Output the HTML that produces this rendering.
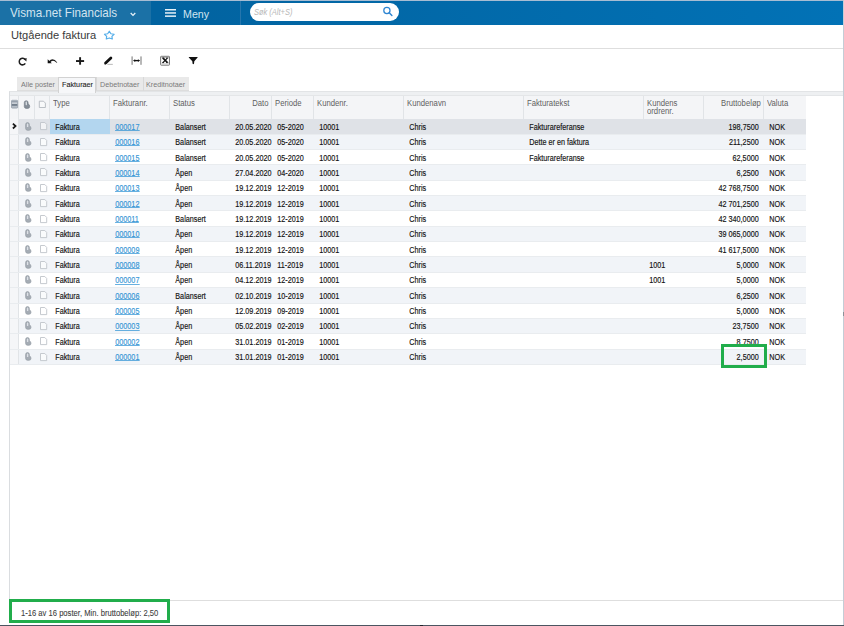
<!DOCTYPE html>
<html><head><meta charset="utf-8">
<style>
*{box-sizing:border-box;margin:0;padding:0}
html,body{width:844px;height:626px;overflow:hidden;background:#fff;font-family:"Liberation Sans",sans-serif;position:relative}
.abs{position:absolute}
#topline{left:0;top:0;width:844px;height:1px;background:#a8bdd3}
#bar{left:0;top:1px;width:844px;height:24.3px;background:linear-gradient(90deg,#0263a0 0px,#0263a0 160px,#0272b6 844px)}
#brand{left:0;top:1px;width:151px;height:24.3px;background:#1b71a6}
#brand .t{position:absolute;left:10.4px;top:5.4px;font-size:12.2px;color:#d3e4f0;white-space:nowrap;transform:scaleX(0.955);transform-origin:0 50%}
#chev{left:130px;top:12px}
#menu{left:151px;top:1px;width:90px;height:24px;border-right:1px solid #2676ad}
#ham{left:165px;top:9px;width:11px;height:8px}
#meny{left:183px;top:6.5px;font-size:11.6px;color:#d3e4f0;transform:scaleX(0.92);transform-origin:0 50%}
#search{left:250px;top:3.3px;width:149px;height:17.6px;border-radius:9px;background:#fff}
#search .ph{position:absolute;left:4px;top:3.5px;font-size:8.7px;font-style:italic;color:#b8b8b8;transform:scaleX(0.86);transform-origin:0 50%;white-space:nowrap}
#sicon{left:383px;top:8px}
#title{left:11px;top:28.7px;font-size:11.12px;color:#3a3a3a;white-space:nowrap}
#star{left:104px;top:30px}
#hr1{left:0;top:48px;width:843px;height:1px;background:#dedede}
#rborder{left:843px;top:0;width:1px;height:626px;background:#c4cdd6}
.ti{position:absolute}
#tabs{left:17px;top:76.7px;height:15.5px}
.tab{position:absolute;top:0;height:14.8px;background:#e9e9e9;font-size:7.2px;color:#7a7a7a;line-height:15.9px;padding-left:3.9px;white-space:nowrap;border-bottom:1px solid #dddddd}
.tt{display:inline-block;transform:scaleX(0.92);transform-origin:0 50%;font-size:7.8px}
.tab.act{background:#f6f7f9;border:1px solid #d2d2d2;border-bottom:none;color:#1e1e1e;height:16.5px;line-height:14.4px;padding-left:3.2px;font-size:7.8px;-webkit-text-stroke-width:0.1px;z-index:5}
#grid{left:9px;top:91px;width:834px;height:509px;border-left:1px solid #dadde0;border-top:1px solid #e2e4e6}
#gband{left:10px;top:92px;width:833px;height:3.5px;background:#eef0f2;border-bottom:1px solid #e4e6e8}
#hdr{left:10px;top:95.5px;height:23.5px;width:795.5px;background:#f4f5f7}
.hc{position:absolute;top:0;height:23.5px;border-right:1px solid #e1e4e7;font-size:8.3px;color:#5f5f5f;padding:3.4px 2.5px 0 3.3px;line-height:8.1px}
.ht{display:inline-block;transform:scaleX(0.93);transform-origin:0 0}
.ht.r{transform-origin:100% 0}
.row{position:absolute;left:10px;width:795.5px;height:15.36px;border-bottom:1px solid #e9ecef}
.row.alt{background:#f1f4f8}
.row.sel{background:#dfe2e7}
.c{position:absolute;top:0.6px;height:15.3px;font-size:8.5px;color:#111;line-height:15.6px;white-space:nowrap;padding:0 5.3px;overflow:visible;transform:scaleX(0.85);transform-origin:5.3px 50%;-webkit-text-stroke-width:0.15px}
.c.r{text-align:right;transform-origin:calc(100% - 5.3px) 50%}
.c a{color:#3596d6;text-decoration:none;background:linear-gradient(#3596d6,#3596d6) no-repeat 0 calc(100% - 1.1px)/100% 0.75px}
#footline{left:10px;top:599.7px;width:833px;height:1px;background:#dedede}
#foot{left:21px;top:607.6px;font-size:8.4px;color:#3c3c3c;white-space:nowrap;-webkit-text-stroke-width:0.08px;transform:scaleX(0.91);transform-origin:0 50%}
#gbox1{left:8.5px;top:599px;width:161.5px;height:23.7px;border:3.4px solid #21ad4b}
#gbox2{left:721.2px;top:344.1px;width:45.8px;height:23.7px;border:3.4px solid #21ad4b}
#bottom{left:0;top:624.6px;width:844px;height:1.4px;background:#4c5561}
.ic{position:absolute}
.arr{left:2.3px;top:4.1px}
.clip{left:14.9px;top:2.6px}
.doc{left:29.6px;top:3.2px}
.rs{position:absolute;left:0;top:0;width:8.5px;height:100%;background:#f5f6f8;border-right:1px solid #e1e4e7}
.selcell{position:absolute;left:39.5px;top:0;width:60px;height:100%;background:#b3d6ef}
</style></head><body>
<div class="abs" id="topline"></div>
<div class="abs" id="bar"></div>
<div class="abs" id="brand"><span class="t">Visma.net Financials</span></div>
<svg class="abs" id="chev" width="6" height="5" viewBox="0 0 6 5"><path d="M0.7 1 L3 3.4 L5.3 1" stroke="#e6f1f8" stroke-width="1.3" fill="none"/></svg>
<div class="abs" id="menu"></div>
<svg class="abs" id="ham" viewBox="0 0 11 8"><rect x="0" y="0" width="11" height="1.5" fill="#e6f1f8"/><rect x="0" y="3.2" width="11" height="1.5" fill="#e6f1f8"/><rect x="0" y="6.4" width="11" height="1.5" fill="#e6f1f8"/></svg>
<div class="abs" id="meny">Meny</div>
<div class="abs" id="search"><span class="ph">Søk (Alt+S)</span></div>
<svg class="abs" style="left:376px;top:2px" width="20" height="20" viewBox="376 2 20 20"><circle cx="386.9" cy="10.4" r="3.1" stroke="#2f86d2" stroke-width="1.25" fill="none"/><path d="M389.2 12.8 L391.9 15.6" stroke="#2f86d2" stroke-width="1.4" stroke-linecap="round"/></svg>

<div class="abs" id="title">Utgående faktura</div>
<svg class="abs" style="left:0;top:25px" width="130" height="20" viewBox="0 25 130 20"><path d="M109.30 31.2 L110.92 33.73 L114.1 34.28 L111.92 36.39 L112.3 39.0 L109.30 37.96 L106.3 39.0 L106.68 36.39 L104.5 34.28 L107.68 33.73 Z" stroke="#56aee9" stroke-width="1.2" fill="none" stroke-linejoin="round"/></svg>
<div class="abs" id="hr1"></div>

<!-- toolbar -->
<svg class="abs" style="left:0;top:50px" width="210" height="22" viewBox="0 50 210 22">
<path d="M25.2 59.6 A3.3 3.3 0 1 0 25.3 63.4" stroke="#1e1e1e" stroke-width="1.5" fill="none"/>
<path d="M23.6 58.9 L26.6 58.1 L26.4 61.4 Z" fill="#1e1e1e"/>
<path d="M48.8 61.4 Q52.8 56.6 57.3 62.4 L56.6 62.8 Q52.8 58.6 50 62.6 Z" fill="#1e1e1e"/>
<path d="M47.7 59.2 L47.7 63.3 L51.8 63.3 Z" fill="#111"/>
<rect x="76" y="60.1" width="8.1" height="1.9" fill="#1a1a1a"/>
<rect x="79.15" y="57.2" width="1.9" height="7.5" fill="#1a1a1a"/>
<path d="M105.6 63.0 L110.9 58.0" stroke="#111" stroke-width="2.8" stroke-linecap="round"/>
<path d="M104.6 64.4 L105 62.2 L106.6 63.8 Z" fill="#111"/>
<rect x="107.4" y="63.9" width="5.4" height="0.7" fill="#9a9a9a"/>
<rect x="131.5" y="56.4" width="1.2" height="8.4" fill="#8a8a8a"/>
<rect x="140.4" y="56.4" width="1.2" height="8.4" fill="#8a8a8a"/>
<path d="M134.5 60.6 L138.6 60.6" stroke="#111" stroke-width="1.3"/>
<path d="M133 60.6 L135.2 59.2 L135.2 62 Z M140.1 60.6 L137.9 59.2 L137.9 62 Z" fill="#111"/>
<rect x="160.6" y="56.3" width="8.9" height="8.9" rx="0.6" stroke="#7a7a7a" stroke-width="1" fill="#fdfdfd"/>
<rect x="161.3" y="57" width="7.5" height="0.6" fill="#909090"/>
<rect x="161.3" y="63.4" width="7.5" height="1.2" fill="#c8c8c8"/>
<path d="M163 58.2 L167.4 62.5" stroke="#111" stroke-width="1.7"/><path d="M167.3 58.2 L163.1 62.5" stroke="#111" stroke-width="1.1"/><path d="M162 58.1 L164.3 58.1 M166.2 58.1 L168.2 58.1 M162 62.6 L164 62.6 M166 62.6 L168.3 62.6" stroke="#111" stroke-width="0.8"/>
<path d="M188.8 56.9 L197.6 56.9 L197.6 57.6 L194.3 61.3 L194.0 63.8 Q193.3 64.7 192.6 63.8 L192.3 61.3 L188.8 57.6 Z" fill="#111"/>
</svg>
<!-- tabs -->
<div class="abs" id="tabs" style="z-index:5">
  <div class="tab" style="left:0;width:41px"><span class="tt">Alle poster</span></div>
  <div class="tab act" style="left:41px;width:37.5px"><span class="tt" style="transform:scaleX(0.93)">Fakturaer</span></div>
  <div class="tab" style="left:78.5px;width:47.5px;border-left:1px solid #d8d8d8"><span class="tt">Debetnotaer</span></div>
  <div class="tab" style="left:125.5px;width:46.5px;border-left:1px solid #d8d8d8;padding-left:2.8px"><span class="tt">Kreditnotaer</span></div>
</div>

<div class="abs" id="grid"></div>
<div class="abs" id="gband"></div>
<div class="abs" id="hdr">
  <div class="hc" style="left:0;width:8.5px"></div>
  <div class="hc" style="left:8.5px;width:16px"></div>
  <div class="hc" style="left:24.5px;width:15px"></div>
  <div class="hc" style="left:39.5px;width:60px"><span class="ht">Type</span></div>
  <div class="hc" style="left:99.5px;width:60px"><span class="ht">Fakturanr.</span></div>
  <div class="hc" style="left:159.5px;width:60px"><span class="ht">Status</span></div>
  <div class="hc" style="left:219.5px;width:42px;text-align:right;padding-right:1.6px"><span class="ht r">Dato</span></div>
  <div class="hc" style="left:261.5px;width:42px"><span class="ht">Periode</span></div>
  <div class="hc" style="left:303.5px;width:90px"><span class="ht">Kundenr.</span></div>
  <div class="hc" style="left:393.5px;width:120px"><span class="ht">Kundenavn</span></div>
  <div class="hc" style="left:513.5px;width:120px"><span class="ht">Fakturatekst</span></div>
  <div class="hc" style="left:633.5px;width:60px"><span class="ht">Kundens<br>ordrenr.</span></div>
  <div class="hc" style="left:693.5px;width:60px;text-align:right;padding-right:1.5px"><span class="ht r">Bruttobeløp</span></div>
  <div class="hc" style="left:753.5px;width:42px;border-right:none"><span class="ht">Valuta</span></div>
</div>

<svg class="abs" style="left:0;top:95px" width="50" height="20" viewBox="0 95 50 20">
<rect x="11.5" y="100.3" width="6.1" height="7.8" rx="0.7" fill="#c9cfd6" stroke="#8893a0" stroke-width="0.7"/>
<rect x="11.8" y="101.2" width="5.5" height="1.1" fill="#8a95a2"/>
<rect x="11.8" y="104.2" width="5.5" height="1.5" fill="#5f6c7b"/>
<rect x="11.8" y="106.6" width="5.5" height="0.9" fill="#9aa4ae"/>
<g transform="translate(23.7 100.1)"><path d="M0.6 6.6 L0.6 2.5 A1.9 1.9 0 0 1 4.4 2.5 L4.4 3.7 Q6.0 4.5 6.0 6.3 A2 2 0 0 1 4 8.3 L2.5 8.3 A1.9 1.9 0 0 1 0.6 6.6 Z" fill="#858d97" stroke="#6f7781" stroke-width="0.6"/><rect x="1.9" y="1.5" width="1.4" height="3.6" rx="0.6" fill="#d5dae0"/></g>
<path d="M39.3 101.2 L43.5 101.2 L45.4 103.1 L45.4 107.5 L39.3 107.5 Z" stroke="#b3b8be" stroke-width="0.9" fill="#f8f9fa" stroke-linejoin="round"/>
</svg>
<div id="rows">
<div class="row sel" style="top:119.20px"><div class="rs"></div><svg class="ic arr" width="5" height="7" viewBox="0 0 5 7"><path d="M0.9 0.7 L3.5 3.1 L0.9 5.5" stroke="#1a1a1a" stroke-width="1.8" fill="none"/></svg><div class="selcell"></div><svg class="ic clip" width="7" height="9" viewBox="0 0 7 9"><path d="M0.6 6.6 L0.6 2.5 A1.9 1.9 0 0 1 4.4 2.5 L4.4 3.7 Q6.0 4.5 6.0 6.3 A2 2 0 0 1 4 8.3 L2.5 8.3 A1.9 1.9 0 0 1 0.6 6.6 Z" fill="#a5acb4" stroke="#8d959e" stroke-width="0.6"/><rect x="1.9" y="1.5" width="1.4" height="3.6" rx="0.6" fill="#dde1e6"/></svg><svg class="ic doc" width="8" height="9" viewBox="0 0 8 9"><path d="M0.5 0.5 L4.8 0.5 L6.7 2.4 L6.7 7.6 L0.5 7.6 Z" stroke="#bfc4c9" stroke-width="0.9" fill="rgba(255,255,255,0.6)" stroke-linejoin="round"/></svg><div class="c" style="left:39.5px;width:60px">Faktura</div><div class="c" style="left:99.5px;width:60px"><a>000017</a></div><div class="c" style="left:159.5px;width:60px">Balansert</div><div class="c" style="left:219.5px;width:42px">20.05.2020</div><div class="c" style="left:261.5px;width:42px">05-2020</div><div class="c" style="left:303.5px;width:90px">10001</div><div class="c" style="left:393.5px;width:120px">Chris</div><div class="c" style="left:513.5px;width:120px">Fakturareferanse</div><div class="c r" style="left:693.5px;width:60px">198,7500</div><div class="c" style="left:753.5px;width:42px">NOK</div></div>
<div class="row alt" style="top:134.56px"><div class="rs"></div><svg class="ic clip" width="7" height="9" viewBox="0 0 7 9"><path d="M0.6 6.6 L0.6 2.5 A1.9 1.9 0 0 1 4.4 2.5 L4.4 3.7 Q6.0 4.5 6.0 6.3 A2 2 0 0 1 4 8.3 L2.5 8.3 A1.9 1.9 0 0 1 0.6 6.6 Z" fill="#a5acb4" stroke="#8d959e" stroke-width="0.6"/><rect x="1.9" y="1.5" width="1.4" height="3.6" rx="0.6" fill="#dde1e6"/></svg><svg class="ic doc" width="8" height="9" viewBox="0 0 8 9"><path d="M0.5 0.5 L4.8 0.5 L6.7 2.4 L6.7 7.6 L0.5 7.6 Z" stroke="#bfc4c9" stroke-width="0.9" fill="rgba(255,255,255,0.6)" stroke-linejoin="round"/></svg><div class="c" style="left:39.5px;width:60px">Faktura</div><div class="c" style="left:99.5px;width:60px"><a>000016</a></div><div class="c" style="left:159.5px;width:60px">Balansert</div><div class="c" style="left:219.5px;width:42px">20.05.2020</div><div class="c" style="left:261.5px;width:42px">05-2020</div><div class="c" style="left:303.5px;width:90px">10001</div><div class="c" style="left:393.5px;width:120px">Chris</div><div class="c" style="left:513.5px;width:120px">Dette er en faktura</div><div class="c r" style="left:693.5px;width:60px">211,2500</div><div class="c" style="left:753.5px;width:42px">NOK</div></div>
<div class="row" style="top:149.92px"><div class="rs"></div><svg class="ic clip" width="7" height="9" viewBox="0 0 7 9"><path d="M0.6 6.6 L0.6 2.5 A1.9 1.9 0 0 1 4.4 2.5 L4.4 3.7 Q6.0 4.5 6.0 6.3 A2 2 0 0 1 4 8.3 L2.5 8.3 A1.9 1.9 0 0 1 0.6 6.6 Z" fill="#a5acb4" stroke="#8d959e" stroke-width="0.6"/><rect x="1.9" y="1.5" width="1.4" height="3.6" rx="0.6" fill="#dde1e6"/></svg><svg class="ic doc" width="8" height="9" viewBox="0 0 8 9"><path d="M0.5 0.5 L4.8 0.5 L6.7 2.4 L6.7 7.6 L0.5 7.6 Z" stroke="#bfc4c9" stroke-width="0.9" fill="rgba(255,255,255,0.6)" stroke-linejoin="round"/></svg><div class="c" style="left:39.5px;width:60px">Faktura</div><div class="c" style="left:99.5px;width:60px"><a>000015</a></div><div class="c" style="left:159.5px;width:60px">Balansert</div><div class="c" style="left:219.5px;width:42px">20.05.2020</div><div class="c" style="left:261.5px;width:42px">05-2020</div><div class="c" style="left:303.5px;width:90px">10001</div><div class="c" style="left:393.5px;width:120px">Chris</div><div class="c" style="left:513.5px;width:120px">Fakturareferanse</div><div class="c r" style="left:693.5px;width:60px">62,5000</div><div class="c" style="left:753.5px;width:42px">NOK</div></div>
<div class="row alt" style="top:165.28px"><div class="rs"></div><svg class="ic clip" width="7" height="9" viewBox="0 0 7 9"><path d="M0.6 6.6 L0.6 2.5 A1.9 1.9 0 0 1 4.4 2.5 L4.4 3.7 Q6.0 4.5 6.0 6.3 A2 2 0 0 1 4 8.3 L2.5 8.3 A1.9 1.9 0 0 1 0.6 6.6 Z" fill="#a5acb4" stroke="#8d959e" stroke-width="0.6"/><rect x="1.9" y="1.5" width="1.4" height="3.6" rx="0.6" fill="#dde1e6"/></svg><svg class="ic doc" width="8" height="9" viewBox="0 0 8 9"><path d="M0.5 0.5 L4.8 0.5 L6.7 2.4 L6.7 7.6 L0.5 7.6 Z" stroke="#bfc4c9" stroke-width="0.9" fill="rgba(255,255,255,0.6)" stroke-linejoin="round"/></svg><div class="c" style="left:39.5px;width:60px">Faktura</div><div class="c" style="left:99.5px;width:60px"><a>000014</a></div><div class="c" style="left:159.5px;width:60px">Åpen</div><div class="c" style="left:219.5px;width:42px">27.04.2020</div><div class="c" style="left:261.5px;width:42px">04-2020</div><div class="c" style="left:303.5px;width:90px">10001</div><div class="c" style="left:393.5px;width:120px">Chris</div><div class="c r" style="left:693.5px;width:60px">6,2500</div><div class="c" style="left:753.5px;width:42px">NOK</div></div>
<div class="row" style="top:180.64px"><div class="rs"></div><svg class="ic clip" width="7" height="9" viewBox="0 0 7 9"><path d="M0.6 6.6 L0.6 2.5 A1.9 1.9 0 0 1 4.4 2.5 L4.4 3.7 Q6.0 4.5 6.0 6.3 A2 2 0 0 1 4 8.3 L2.5 8.3 A1.9 1.9 0 0 1 0.6 6.6 Z" fill="#a5acb4" stroke="#8d959e" stroke-width="0.6"/><rect x="1.9" y="1.5" width="1.4" height="3.6" rx="0.6" fill="#dde1e6"/></svg><svg class="ic doc" width="8" height="9" viewBox="0 0 8 9"><path d="M0.5 0.5 L4.8 0.5 L6.7 2.4 L6.7 7.6 L0.5 7.6 Z" stroke="#bfc4c9" stroke-width="0.9" fill="rgba(255,255,255,0.6)" stroke-linejoin="round"/></svg><div class="c" style="left:39.5px;width:60px">Faktura</div><div class="c" style="left:99.5px;width:60px"><a>000013</a></div><div class="c" style="left:159.5px;width:60px">Åpen</div><div class="c" style="left:219.5px;width:42px">19.12.2019</div><div class="c" style="left:261.5px;width:42px">12-2019</div><div class="c" style="left:303.5px;width:90px">10001</div><div class="c" style="left:393.5px;width:120px">Chris</div><div class="c r" style="left:693.5px;width:60px">42 768,7500</div><div class="c" style="left:753.5px;width:42px">NOK</div></div>
<div class="row alt" style="top:196.00px"><div class="rs"></div><svg class="ic clip" width="7" height="9" viewBox="0 0 7 9"><path d="M0.6 6.6 L0.6 2.5 A1.9 1.9 0 0 1 4.4 2.5 L4.4 3.7 Q6.0 4.5 6.0 6.3 A2 2 0 0 1 4 8.3 L2.5 8.3 A1.9 1.9 0 0 1 0.6 6.6 Z" fill="#a5acb4" stroke="#8d959e" stroke-width="0.6"/><rect x="1.9" y="1.5" width="1.4" height="3.6" rx="0.6" fill="#dde1e6"/></svg><svg class="ic doc" width="8" height="9" viewBox="0 0 8 9"><path d="M0.5 0.5 L4.8 0.5 L6.7 2.4 L6.7 7.6 L0.5 7.6 Z" stroke="#bfc4c9" stroke-width="0.9" fill="rgba(255,255,255,0.6)" stroke-linejoin="round"/></svg><div class="c" style="left:39.5px;width:60px">Faktura</div><div class="c" style="left:99.5px;width:60px"><a>000012</a></div><div class="c" style="left:159.5px;width:60px">Åpen</div><div class="c" style="left:219.5px;width:42px">19.12.2019</div><div class="c" style="left:261.5px;width:42px">12-2019</div><div class="c" style="left:303.5px;width:90px">10001</div><div class="c" style="left:393.5px;width:120px">Chris</div><div class="c r" style="left:693.5px;width:60px">42 701,2500</div><div class="c" style="left:753.5px;width:42px">NOK</div></div>
<div class="row" style="top:211.36px"><div class="rs"></div><svg class="ic clip" width="7" height="9" viewBox="0 0 7 9"><path d="M0.6 6.6 L0.6 2.5 A1.9 1.9 0 0 1 4.4 2.5 L4.4 3.7 Q6.0 4.5 6.0 6.3 A2 2 0 0 1 4 8.3 L2.5 8.3 A1.9 1.9 0 0 1 0.6 6.6 Z" fill="#a5acb4" stroke="#8d959e" stroke-width="0.6"/><rect x="1.9" y="1.5" width="1.4" height="3.6" rx="0.6" fill="#dde1e6"/></svg><svg class="ic doc" width="8" height="9" viewBox="0 0 8 9"><path d="M0.5 0.5 L4.8 0.5 L6.7 2.4 L6.7 7.6 L0.5 7.6 Z" stroke="#bfc4c9" stroke-width="0.9" fill="rgba(255,255,255,0.6)" stroke-linejoin="round"/></svg><div class="c" style="left:39.5px;width:60px">Faktura</div><div class="c" style="left:99.5px;width:60px"><a>000011</a></div><div class="c" style="left:159.5px;width:60px">Balansert</div><div class="c" style="left:219.5px;width:42px">19.12.2019</div><div class="c" style="left:261.5px;width:42px">12-2019</div><div class="c" style="left:303.5px;width:90px">10001</div><div class="c" style="left:393.5px;width:120px">Chris</div><div class="c r" style="left:693.5px;width:60px">42 340,0000</div><div class="c" style="left:753.5px;width:42px">NOK</div></div>
<div class="row alt" style="top:226.72px"><div class="rs"></div><svg class="ic clip" width="7" height="9" viewBox="0 0 7 9"><path d="M0.6 6.6 L0.6 2.5 A1.9 1.9 0 0 1 4.4 2.5 L4.4 3.7 Q6.0 4.5 6.0 6.3 A2 2 0 0 1 4 8.3 L2.5 8.3 A1.9 1.9 0 0 1 0.6 6.6 Z" fill="#a5acb4" stroke="#8d959e" stroke-width="0.6"/><rect x="1.9" y="1.5" width="1.4" height="3.6" rx="0.6" fill="#dde1e6"/></svg><svg class="ic doc" width="8" height="9" viewBox="0 0 8 9"><path d="M0.5 0.5 L4.8 0.5 L6.7 2.4 L6.7 7.6 L0.5 7.6 Z" stroke="#bfc4c9" stroke-width="0.9" fill="rgba(255,255,255,0.6)" stroke-linejoin="round"/></svg><div class="c" style="left:39.5px;width:60px">Faktura</div><div class="c" style="left:99.5px;width:60px"><a>000010</a></div><div class="c" style="left:159.5px;width:60px">Åpen</div><div class="c" style="left:219.5px;width:42px">19.12.2019</div><div class="c" style="left:261.5px;width:42px">12-2019</div><div class="c" style="left:303.5px;width:90px">10001</div><div class="c" style="left:393.5px;width:120px">Chris</div><div class="c r" style="left:693.5px;width:60px">39 065,0000</div><div class="c" style="left:753.5px;width:42px">NOK</div></div>
<div class="row" style="top:242.08px"><div class="rs"></div><svg class="ic clip" width="7" height="9" viewBox="0 0 7 9"><path d="M0.6 6.6 L0.6 2.5 A1.9 1.9 0 0 1 4.4 2.5 L4.4 3.7 Q6.0 4.5 6.0 6.3 A2 2 0 0 1 4 8.3 L2.5 8.3 A1.9 1.9 0 0 1 0.6 6.6 Z" fill="#a5acb4" stroke="#8d959e" stroke-width="0.6"/><rect x="1.9" y="1.5" width="1.4" height="3.6" rx="0.6" fill="#dde1e6"/></svg><svg class="ic doc" width="8" height="9" viewBox="0 0 8 9"><path d="M0.5 0.5 L4.8 0.5 L6.7 2.4 L6.7 7.6 L0.5 7.6 Z" stroke="#bfc4c9" stroke-width="0.9" fill="rgba(255,255,255,0.6)" stroke-linejoin="round"/></svg><div class="c" style="left:39.5px;width:60px">Faktura</div><div class="c" style="left:99.5px;width:60px"><a>000009</a></div><div class="c" style="left:159.5px;width:60px">Åpen</div><div class="c" style="left:219.5px;width:42px">19.12.2019</div><div class="c" style="left:261.5px;width:42px">12-2019</div><div class="c" style="left:303.5px;width:90px">10001</div><div class="c" style="left:393.5px;width:120px">Chris</div><div class="c r" style="left:693.5px;width:60px">41 617,5000</div><div class="c" style="left:753.5px;width:42px">NOK</div></div>
<div class="row alt" style="top:257.44px"><div class="rs"></div><svg class="ic clip" width="7" height="9" viewBox="0 0 7 9"><path d="M0.6 6.6 L0.6 2.5 A1.9 1.9 0 0 1 4.4 2.5 L4.4 3.7 Q6.0 4.5 6.0 6.3 A2 2 0 0 1 4 8.3 L2.5 8.3 A1.9 1.9 0 0 1 0.6 6.6 Z" fill="#a5acb4" stroke="#8d959e" stroke-width="0.6"/><rect x="1.9" y="1.5" width="1.4" height="3.6" rx="0.6" fill="#dde1e6"/></svg><svg class="ic doc" width="8" height="9" viewBox="0 0 8 9"><path d="M0.5 0.5 L4.8 0.5 L6.7 2.4 L6.7 7.6 L0.5 7.6 Z" stroke="#bfc4c9" stroke-width="0.9" fill="rgba(255,255,255,0.6)" stroke-linejoin="round"/></svg><div class="c" style="left:39.5px;width:60px">Faktura</div><div class="c" style="left:99.5px;width:60px"><a>000008</a></div><div class="c" style="left:159.5px;width:60px">Åpen</div><div class="c" style="left:219.5px;width:42px">06.11.2019</div><div class="c" style="left:261.5px;width:42px">11-2019</div><div class="c" style="left:303.5px;width:90px">10001</div><div class="c" style="left:393.5px;width:120px">Chris</div><div class="c" style="left:633.5px;width:60px">1001</div><div class="c r" style="left:693.5px;width:60px">5,0000</div><div class="c" style="left:753.5px;width:42px">NOK</div></div>
<div class="row" style="top:272.80px"><div class="rs"></div><svg class="ic clip" width="7" height="9" viewBox="0 0 7 9"><path d="M0.6 6.6 L0.6 2.5 A1.9 1.9 0 0 1 4.4 2.5 L4.4 3.7 Q6.0 4.5 6.0 6.3 A2 2 0 0 1 4 8.3 L2.5 8.3 A1.9 1.9 0 0 1 0.6 6.6 Z" fill="#a5acb4" stroke="#8d959e" stroke-width="0.6"/><rect x="1.9" y="1.5" width="1.4" height="3.6" rx="0.6" fill="#dde1e6"/></svg><svg class="ic doc" width="8" height="9" viewBox="0 0 8 9"><path d="M0.5 0.5 L4.8 0.5 L6.7 2.4 L6.7 7.6 L0.5 7.6 Z" stroke="#bfc4c9" stroke-width="0.9" fill="rgba(255,255,255,0.6)" stroke-linejoin="round"/></svg><div class="c" style="left:39.5px;width:60px">Faktura</div><div class="c" style="left:99.5px;width:60px"><a>000007</a></div><div class="c" style="left:159.5px;width:60px">Åpen</div><div class="c" style="left:219.5px;width:42px">04.12.2019</div><div class="c" style="left:261.5px;width:42px">12-2019</div><div class="c" style="left:303.5px;width:90px">10001</div><div class="c" style="left:393.5px;width:120px">Chris</div><div class="c" style="left:633.5px;width:60px">1001</div><div class="c r" style="left:693.5px;width:60px">5,0000</div><div class="c" style="left:753.5px;width:42px">NOK</div></div>
<div class="row alt" style="top:288.16px"><div class="rs"></div><svg class="ic clip" width="7" height="9" viewBox="0 0 7 9"><path d="M0.6 6.6 L0.6 2.5 A1.9 1.9 0 0 1 4.4 2.5 L4.4 3.7 Q6.0 4.5 6.0 6.3 A2 2 0 0 1 4 8.3 L2.5 8.3 A1.9 1.9 0 0 1 0.6 6.6 Z" fill="#a5acb4" stroke="#8d959e" stroke-width="0.6"/><rect x="1.9" y="1.5" width="1.4" height="3.6" rx="0.6" fill="#dde1e6"/></svg><svg class="ic doc" width="8" height="9" viewBox="0 0 8 9"><path d="M0.5 0.5 L4.8 0.5 L6.7 2.4 L6.7 7.6 L0.5 7.6 Z" stroke="#bfc4c9" stroke-width="0.9" fill="rgba(255,255,255,0.6)" stroke-linejoin="round"/></svg><div class="c" style="left:39.5px;width:60px">Faktura</div><div class="c" style="left:99.5px;width:60px"><a>000006</a></div><div class="c" style="left:159.5px;width:60px">Balansert</div><div class="c" style="left:219.5px;width:42px">02.10.2019</div><div class="c" style="left:261.5px;width:42px">10-2019</div><div class="c" style="left:303.5px;width:90px">10001</div><div class="c" style="left:393.5px;width:120px">Chris</div><div class="c r" style="left:693.5px;width:60px">6,2500</div><div class="c" style="left:753.5px;width:42px">NOK</div></div>
<div class="row" style="top:303.52px"><div class="rs"></div><svg class="ic clip" width="7" height="9" viewBox="0 0 7 9"><path d="M0.6 6.6 L0.6 2.5 A1.9 1.9 0 0 1 4.4 2.5 L4.4 3.7 Q6.0 4.5 6.0 6.3 A2 2 0 0 1 4 8.3 L2.5 8.3 A1.9 1.9 0 0 1 0.6 6.6 Z" fill="#a5acb4" stroke="#8d959e" stroke-width="0.6"/><rect x="1.9" y="1.5" width="1.4" height="3.6" rx="0.6" fill="#dde1e6"/></svg><svg class="ic doc" width="8" height="9" viewBox="0 0 8 9"><path d="M0.5 0.5 L4.8 0.5 L6.7 2.4 L6.7 7.6 L0.5 7.6 Z" stroke="#bfc4c9" stroke-width="0.9" fill="rgba(255,255,255,0.6)" stroke-linejoin="round"/></svg><div class="c" style="left:39.5px;width:60px">Faktura</div><div class="c" style="left:99.5px;width:60px"><a>000005</a></div><div class="c" style="left:159.5px;width:60px">Åpen</div><div class="c" style="left:219.5px;width:42px">12.09.2019</div><div class="c" style="left:261.5px;width:42px">09-2019</div><div class="c" style="left:303.5px;width:90px">10001</div><div class="c" style="left:393.5px;width:120px">Chris</div><div class="c r" style="left:693.5px;width:60px">5,0000</div><div class="c" style="left:753.5px;width:42px">NOK</div></div>
<div class="row alt" style="top:318.88px"><div class="rs"></div><svg class="ic clip" width="7" height="9" viewBox="0 0 7 9"><path d="M0.6 6.6 L0.6 2.5 A1.9 1.9 0 0 1 4.4 2.5 L4.4 3.7 Q6.0 4.5 6.0 6.3 A2 2 0 0 1 4 8.3 L2.5 8.3 A1.9 1.9 0 0 1 0.6 6.6 Z" fill="#a5acb4" stroke="#8d959e" stroke-width="0.6"/><rect x="1.9" y="1.5" width="1.4" height="3.6" rx="0.6" fill="#dde1e6"/></svg><svg class="ic doc" width="8" height="9" viewBox="0 0 8 9"><path d="M0.5 0.5 L4.8 0.5 L6.7 2.4 L6.7 7.6 L0.5 7.6 Z" stroke="#bfc4c9" stroke-width="0.9" fill="rgba(255,255,255,0.6)" stroke-linejoin="round"/></svg><div class="c" style="left:39.5px;width:60px">Faktura</div><div class="c" style="left:99.5px;width:60px"><a>000003</a></div><div class="c" style="left:159.5px;width:60px">Åpen</div><div class="c" style="left:219.5px;width:42px">05.02.2019</div><div class="c" style="left:261.5px;width:42px">02-2019</div><div class="c" style="left:303.5px;width:90px">10001</div><div class="c" style="left:393.5px;width:120px">Chris</div><div class="c r" style="left:693.5px;width:60px">23,7500</div><div class="c" style="left:753.5px;width:42px">NOK</div></div>
<div class="row" style="top:334.24px"><div class="rs"></div><svg class="ic clip" width="7" height="9" viewBox="0 0 7 9"><path d="M0.6 6.6 L0.6 2.5 A1.9 1.9 0 0 1 4.4 2.5 L4.4 3.7 Q6.0 4.5 6.0 6.3 A2 2 0 0 1 4 8.3 L2.5 8.3 A1.9 1.9 0 0 1 0.6 6.6 Z" fill="#a5acb4" stroke="#8d959e" stroke-width="0.6"/><rect x="1.9" y="1.5" width="1.4" height="3.6" rx="0.6" fill="#dde1e6"/></svg><svg class="ic doc" width="8" height="9" viewBox="0 0 8 9"><path d="M0.5 0.5 L4.8 0.5 L6.7 2.4 L6.7 7.6 L0.5 7.6 Z" stroke="#bfc4c9" stroke-width="0.9" fill="rgba(255,255,255,0.6)" stroke-linejoin="round"/></svg><div class="c" style="left:39.5px;width:60px">Faktura</div><div class="c" style="left:99.5px;width:60px"><a>000002</a></div><div class="c" style="left:159.5px;width:60px">Åpen</div><div class="c" style="left:219.5px;width:42px">31.01.2019</div><div class="c" style="left:261.5px;width:42px">01-2019</div><div class="c" style="left:303.5px;width:90px">10001</div><div class="c" style="left:393.5px;width:120px">Chris</div><div class="c r" style="left:693.5px;width:60px">8,7500</div><div class="c" style="left:753.5px;width:42px">NOK</div></div>
<div class="row alt" style="top:349.60px"><div class="rs"></div><svg class="ic clip" width="7" height="9" viewBox="0 0 7 9"><path d="M0.6 6.6 L0.6 2.5 A1.9 1.9 0 0 1 4.4 2.5 L4.4 3.7 Q6.0 4.5 6.0 6.3 A2 2 0 0 1 4 8.3 L2.5 8.3 A1.9 1.9 0 0 1 0.6 6.6 Z" fill="#a5acb4" stroke="#8d959e" stroke-width="0.6"/><rect x="1.9" y="1.5" width="1.4" height="3.6" rx="0.6" fill="#dde1e6"/></svg><svg class="ic doc" width="8" height="9" viewBox="0 0 8 9"><path d="M0.5 0.5 L4.8 0.5 L6.7 2.4 L6.7 7.6 L0.5 7.6 Z" stroke="#bfc4c9" stroke-width="0.9" fill="rgba(255,255,255,0.6)" stroke-linejoin="round"/></svg><div class="c" style="left:39.5px;width:60px">Faktura</div><div class="c" style="left:99.5px;width:60px"><a>000001</a></div><div class="c" style="left:159.5px;width:60px">Åpen</div><div class="c" style="left:219.5px;width:42px">31.01.2019</div><div class="c" style="left:261.5px;width:42px">01-2019</div><div class="c" style="left:303.5px;width:90px">10001</div><div class="c" style="left:393.5px;width:120px">Chris</div><div class="c r" style="left:693.5px;width:60px">2,5000</div><div class="c" style="left:753.5px;width:42px">NOK</div></div>
</div><!--/rows-->

<div class="abs" id="footline"></div>
<div class="abs" id="foot">1-16 av 16 poster, Min. bruttobeløp: 2,50</div>
<div class="abs" id="gbox1"></div>
<div class="abs" id="gbox2"></div>
<div class="abs" id="rborder"></div>
<div class="abs" id="bottom"></div>
<div class="abs" style="left:420px;top:625px;width:3px;height:1px;background:#1e2228"></div>
<div class="abs" style="left:843px;top:312px;width:1px;height:4px;background:#8c9198"></div>
</body></html>
